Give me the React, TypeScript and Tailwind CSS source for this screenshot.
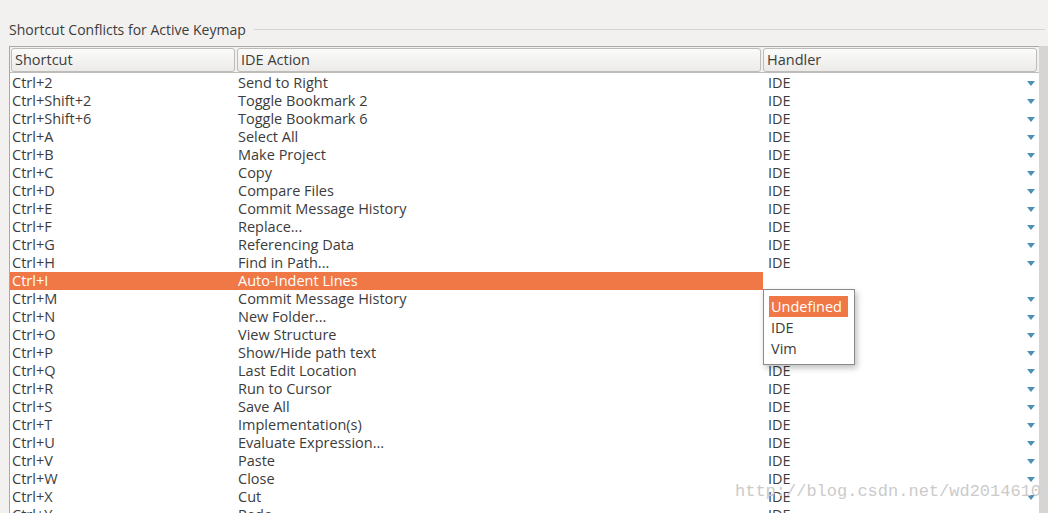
const rows: [string, string][] = [
  ["Ctrl+2", "Send to Right"],
  ["Ctrl+Shift+2", "Toggle Bookmark 2"],
  ["Ctrl+Shift+6", "Toggle Bookmark 6"],
  ["Ctrl+A", "Select All"],
  ["Ctrl+B", "Make Project"],
  ["Ctrl+C", "Copy"],
  ["Ctrl+D", "Compare Files"],
  ["Ctrl+E", "Commit Message History"],
  ["Ctrl+F", "Replace..."],
  ["Ctrl+G", "Referencing Data"],
  ["Ctrl+H", "Find in Path..."],
  ["Ctrl+I", "Auto-Indent Lines"],
  ["Ctrl+M", "Commit Message History"],
  ["Ctrl+N", "New Folder..."],
  ["Ctrl+O", "View Structure"],
  ["Ctrl+P", "Show/Hide path text"],
  ["Ctrl+Q", "Last Edit Location"],
  ["Ctrl+R", "Run to Cursor"],
  ["Ctrl+S", "Save All"],
  ["Ctrl+T", "Implementation(s)"],
  ["Ctrl+U", "Evaluate Expression..."],
  ["Ctrl+V", "Paste"],
  ["Ctrl+W", "Close"],
  ["Ctrl+X", "Cut"],
  ["Ctrl+Y", "Redo"],
];

const SELECTED = 11;

function Arrow() {
  return (
    <svg width="8" height="5" viewBox="0 0 8 5" className="block">
      <path d="M0 0 H8 L4 5 Z" fill="#4e8fb6" />
    </svg>
  );
}

function HeaderCell({ label, className }: { label: string; className: string }) {
  return (
    <div
      className={`h-[24px] flex items-center px-[3px] rounded-[3px] border border-[#bdbcb9] bg-gradient-to-b from-[#fbfbfa] to-[#ecebea] text-[#3c3c3c] ${className}`}
    >
      {label}
    </div>
  );
}

export default function App() {
  return (
    <div
      className="relative w-[1048px] h-[513px] overflow-hidden bg-[#f2f1f0] text-[14.5px] text-[#3c3c3c]"
      style={{ fontFamily: '"Open Sans", "DejaVu Sans", sans-serif' }}
    >
      {/* group label */}
      <div className="flex items-center h-[20px] mt-[19px] pl-[9px]">
        <span className="text-[14px]">Shortcut Conflicts for Active Keymap</span>
        <div className="flex-1 h-px bg-[#d6d5d3] ml-[8px] mr-[3px]" />
      </div>

      {/* table */}
      <div className="flex mt-[7px]">
        <div className="ml-[9px] w-[1030px] border-l border-t border-[#a9a8a5] bg-white">
          <div className="flex gap-[2px] pl-[1px] pt-[1px] bg-[#f2f1f0] border-b border-[#bdbcb9]">
            <HeaderCell label="Shortcut" className="w-[224px]" />
            <HeaderCell label="IDE Action" className="w-[524px]" />
            <HeaderCell label="Handler" className="w-[274px]" />
          </div>
          <div className="pt-[1px]">
            {rows.map(([key, action], i) => {
              const sel = i === SELECTED;
              const hidden = i >= 12 && i <= 15;
              return (
                <div key={key} className="flex h-[18px] items-center leading-[18px]">
                  <div
                    className={`flex h-full w-[753px] ${sel ? "bg-[#f07746] text-white" : ""}`}
                  >
                    <div className="w-[226px] pl-[2px] whitespace-nowrap">{key}</div>
                    <div className="pl-[2px] whitespace-nowrap">{action}</div>
                  </div>
                  <div className="flex-1 flex items-center h-full pl-[5px] pr-[4px]">
                    <span className="flex-1">{sel || hidden ? "" : "IDE"}</span>
                    {!sel && <Arrow />}
                  </div>
                </div>
              );
            })}
          </div>
        </div>
        <div className="flex-1 bg-[#d6d5d3] self-stretch" />
      </div>

      {/* handler popup */}
      <div className="absolute left-[763px] top-[289px] w-[92px] h-[76px] bg-white border border-[#8b8a88] shadow-[2px_3px_6px_rgba(0,0,0,0.25)] pt-[6px] px-[5px]">
        <div className="h-[21px] leading-[21px] bg-[#f07746] text-white pl-[2px] w-[79px] text-[14.5px]">
          Undefined
        </div>
        <div className="h-[21px] leading-[21px] pl-[2px]">IDE</div>
        <div className="h-[21px] leading-[21px] pl-[2px]">Vim</div>
      </div>

      {/* watermark */}
      <div
        className="absolute left-[735px] top-[479px] text-[17px] text-[#cbcbcb] whitespace-nowrap"
        style={{ fontFamily: '"Liberation Mono", monospace' }}
      >
        http://blog.csdn.net/wd2014610
      </div>
    </div>
  );
}
